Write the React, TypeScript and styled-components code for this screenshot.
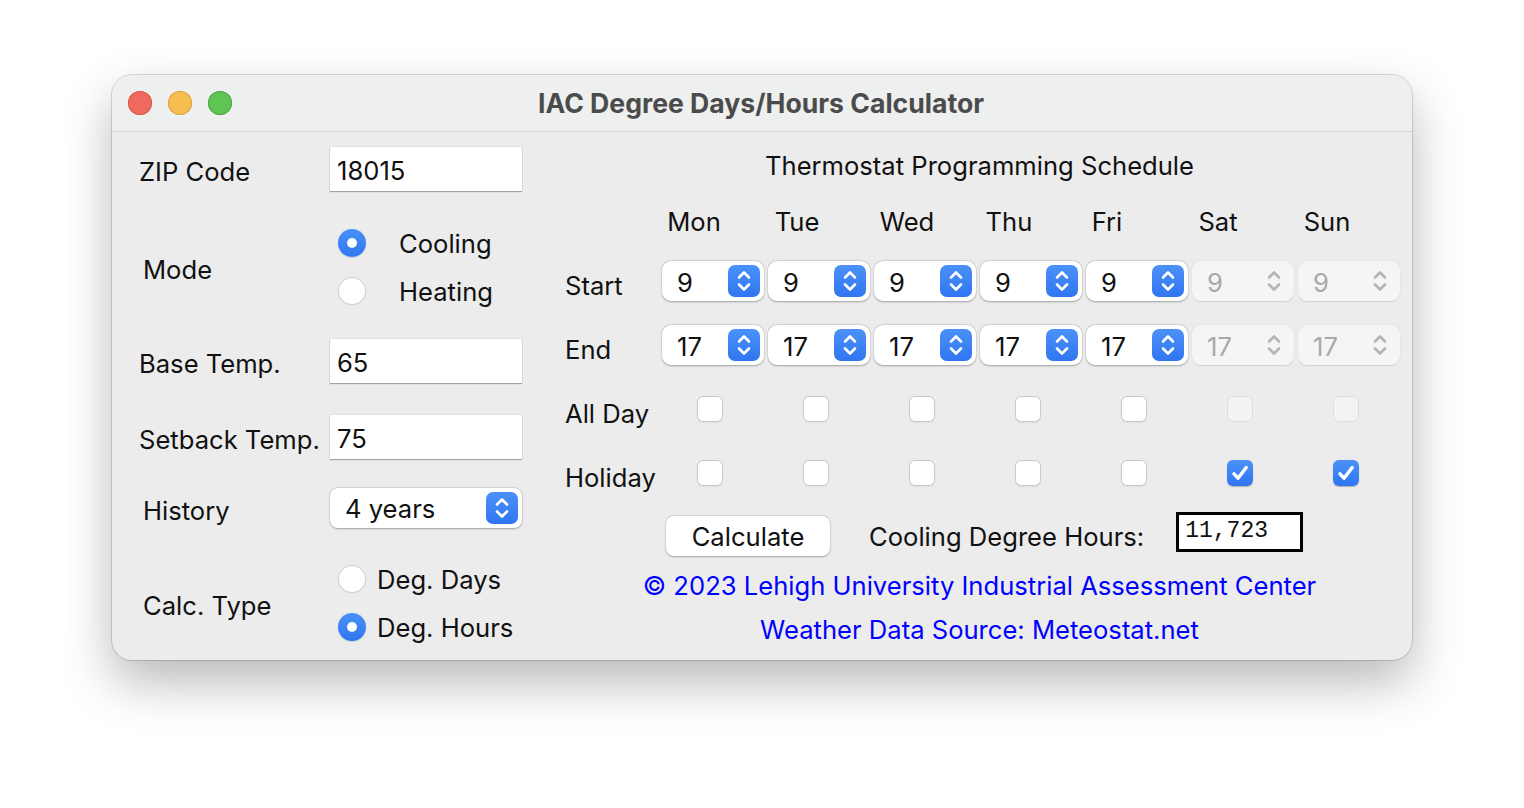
import React from 'react';
import styled, { createGlobalStyle } from 'styled-components';

const GlobalStyle = createGlobalStyle`
  html, body {
    margin: 0;
    padding: 0;
    background: #ffffff;
  }
  body {
    font-family: Inter, "Noto Sans", "Liberation Sans", sans-serif;
    color: #111;
  }
`;

const FS = '25.6px';

const Page = styled.div`
  width: 1524px;
  height: 808px;
  box-sizing: border-box;
  padding: 75px 0 0 112px;
`;

const Window = styled.div`
  width: 1300px;
  height: 585px;
  border-radius: 20px;
  overflow: hidden;
  background: #ececec;
  box-shadow: 0 22px 50px rgba(0, 0, 0, 0.28), 0 0 0 1px rgba(0, 0, 0, 0.14);
  display: flex;
  flex-direction: column;
`;

const TitleBar = styled.div`
  flex: none;
  height: 57px;
  box-sizing: border-box;
  display: grid;
  grid-template-columns: 1fr auto 1fr;
  align-items: center;
  padding: 0 16px;
  background: #eeefef;
  border-bottom: 1px solid #d3d3d3;
`;

const Lights = styled.div`
  display: flex;
  gap: 16px;
`;

const Light = styled.span<{ $color: string; $edge: string }>`
  width: 24px;
  height: 24px;
  border-radius: 50%;
  background: ${(p) => p.$color};
  box-shadow: inset 0 0 0 1px ${(p) => p.$edge};
`;

const Title = styled.div`
  font-size: 26.6px;
  font-weight: 700;
  color: #4b4b4b;
  padding-right: 2px;
`;

const Body = styled.div`
  flex: 1;
  display: grid;
  grid-template-columns: 440px 1fr;
`;

const LeftPanel = styled.div`
  padding: 15px 0 0 27px;
  display: flex;
  flex-direction: column;
`;

const FormRow = styled.div<{ $top: number; $h: number }>`
  margin-top: ${(p) => p.$top}px;
  height: ${(p) => p.$h}px;
  display: grid;
  grid-template-columns: 191px 192px;
  align-items: center;
`;

const Label = styled.div<{ $indent?: number }>`
  font-size: ${FS};
  padding-top: 5px;
  padding-left: ${(p) => p.$indent || 0}px;
  white-space: nowrap;
`;

const TextField = styled.div`
  height: 44px;
  box-sizing: border-box;
  padding: 2px 0 0 7px;
  display: flex;
  align-items: center;
  background: #fff;
  font-size: ${FS};
  box-shadow: 0 1px 1px rgba(0, 0, 0, 0.28), 0 0 0 0.5px rgba(0, 0, 0, 0.08);
`;

const RadioGroup = styled.div`
  display: flex;
  flex-direction: column;
  padding-left: 8px;
`;

const RadioOption = styled.div<{ $gap: number }>`
  height: 48px;
  display: flex;
  align-items: center;
  gap: ${(p) => p.$gap}px;
  font-size: ${FS};
  white-space: nowrap;
`;

const RadioDot = styled.span<{ $on?: boolean }>`
  flex: none;
  width: 28px;
  height: 28px;
  border-radius: 50%;
  box-sizing: border-box;
  display: flex;
  align-items: center;
  justify-content: center;
  background: ${(p) => (p.$on ? 'linear-gradient(#4b91f8, #2f76f2)' : '#fff')};
  box-shadow: ${(p) =>
    p.$on
      ? '0 0.5px 1px rgba(0,0,0,0.25)'
      : 'inset 0 0 0 1px #cfcfcf, 0 0.5px 1px rgba(0,0,0,0.08)'};
  &::after {
    content: '';
    display: ${(p) => (p.$on ? 'block' : 'none')};
    width: 10px;
    height: 10px;
    border-radius: 50%;
    background: #fff;
  }
`;

const SelectBox = styled.div`
  height: 40px;
  box-sizing: border-box;
  border-radius: 8px;
  background: #fff;
  box-shadow: 0 0.5px 2px rgba(0, 0, 0, 0.3), 0 0 0 0.5px rgba(0, 0, 0, 0.06);
  display: flex;
  align-items: center;
  justify-content: space-between;
  padding: 0 4px 0 15px;
  font-size: ${FS};
`;

const Stepper = styled.span<{ $off?: boolean }>`
  flex: none;
  width: 32px;
  height: 32px;
  border-radius: 7px;
  display: flex;
  align-items: center;
  justify-content: center;
  background: ${(p) => (p.$off ? 'transparent' : 'linear-gradient(#4b91f8, #2f76f2)')};
  svg {
    display: block;
  }
`;

const RightPanel = styled.div`
  padding: 19px 8px 0 13px;
  display: flex;
  flex-direction: column;
`;

const ScheduleTitle = styled.div`
  height: 30px;
  line-height: 30px;
  text-align: center;
  padding-right: 10px;
  font-size: ${FS};
`;

const Grid = styled.div`
  margin-top: 25px;
  display: grid;
  grid-template-columns: 97px repeat(7, 106px);
  grid-template-rows: 31px repeat(4, 40px);
  row-gap: 24px;
  align-items: center;
`;

const DayHead = styled.div<{ $c: number }>`
  width: ${(p) => p.$c * 2}px;
  text-align: center;
  font-size: ${FS};
`;

const RowLabel = styled.div`
  font-size: ${FS};
  padding-top: 8px;
  white-space: nowrap;
`;

const Spinner = styled.div<{ $off?: boolean }>`
  width: 102px;
  height: 40px;
  box-sizing: border-box;
  border-radius: 9px;
  display: flex;
  align-items: center;
  justify-content: space-between;
  padding: 0 4px 0 15px;
  font-size: ${FS};
  background: ${(p) => (p.$off ? '#f5f5f5' : '#fff')};
  color: ${(p) => (p.$off ? '#a9a9a9' : '#111')};
  box-shadow: ${(p) =>
    p.$off
      ? '0 0.5px 1.5px rgba(0,0,0,0.12)'
      : '0 0.5px 2px rgba(0,0,0,0.3), 0 0 0 0.5px rgba(0,0,0,0.06)'};
`;

const SpinValue = styled.span`
  padding-top: 3px;
`;

const CheckCell = styled.div`
  padding-left: 35px;
  display: flex;
  align-items: center;
`;

const Check = styled.span<{ $on?: boolean; $off?: boolean }>`
  width: 26px;
  height: 26px;
  border-radius: 6px;
  box-sizing: border-box;
  display: flex;
  align-items: center;
  justify-content: center;
  background: ${(p) =>
    p.$on ? 'linear-gradient(#4b91f8, #2f76f2)' : p.$off ? '#f3f3f3' : '#fff'};
  box-shadow: ${(p) =>
    p.$on
      ? '0 0.5px 1px rgba(0,0,0,0.25)'
      : p.$off
      ? 'inset 0 0 0 1px #dedede'
      : 'inset 0 0 0 1px #c9c9c9, 0 0.5px 1px rgba(0,0,0,0.06)'};
`;

const CalcRow = styled.div`
  margin-top: 19px;
  height: 44px;
  display: flex;
  align-items: flex-start;
  padding-left: 101px;
`;

const Button = styled.div`
  margin-top: 4px;
  width: 164px;
  height: 40px;
  border-radius: 8px;
  background: #fff;
  box-shadow: 0 0.5px 2px rgba(0, 0, 0, 0.3), 0 0 0 0.5px rgba(0, 0, 0, 0.06);
  display: flex;
  align-items: center;
  justify-content: center;
  font-size: ${FS};
`;

const ResultLabel = styled.div`
  margin-left: 39px;
  height: 48px;
  display: flex;
  align-items: center;
  font-size: ${FS};
  white-space: nowrap;
`;

const ResultBox = styled.div`
  margin-left: 32px;
  width: 127px;
  height: 40px;
  box-sizing: border-box;
  border: 3px solid #000;
  background: #fff;
  padding: 0 0 3px 6px;
  display: flex;
  align-items: center;
  font-family: "Liberation Mono", "DejaVu Sans Mono", monospace;
  font-size: 23px;
`;

const FooterLine = styled.div<{ $top: number }>`
  margin-top: ${(p) => p.$top}px;
  height: 30px;
  line-height: 30px;
  text-align: center;
  padding-right: 10px;
  font-size: ${FS};
  color: #0000ff;
  white-space: nowrap;
`;

const Chevrons: React.FC<{ color: string }> = ({ color }) => (
  <svg width="32" height="32" viewBox="0 0 32 32" fill="none">
    <path
      d="M11 12.5 L16 7.5 L21 12.5 M11 19.5 L16 24.5 L21 19.5"
      stroke={color}
      strokeWidth="2.6"
      strokeLinecap="round"
      strokeLinejoin="round"
    />
  </svg>
);

const Tick: React.FC = () => (
  <svg width="26" height="26" viewBox="0 0 26 26" fill="none">
    <path
      d="M7 13.8 L11 18.2 L19.2 7.5"
      stroke="#fff"
      strokeWidth="3.4"
      strokeLinecap="round"
      strokeLinejoin="round"
    />
  </svg>
);

const days = [
  { name: 'Mon', c: 32 },
  { name: 'Tue', c: 29 },
  { name: 'Wed', c: 33 },
  { name: 'Thu', c: 29 },
  { name: 'Fri', c: 21 },
  { name: 'Sat', c: 26 },
  { name: 'Sun', c: 29 },
];

const weekend = (i: number) => i >= 5;

const App: React.FC = () => {
  return (
    <Page>
      <GlobalStyle />
      <Window>
        <TitleBar>
          <Lights>
            <Light $color="#ef6a5e" $edge="#d9574b" />
            <Light $color="#f6be50" $edge="#dea23a" />
            <Light $color="#5fc454" $edge="#4ca73f" />
          </Lights>
          <Title>IAC Degree Days/Hours Calculator</Title>
          <div />
        </TitleBar>
        <Body>
          <LeftPanel>
            <FormRow $top={0} $h={44}>
              <Label>ZIP Code</Label>
              <TextField>18015</TextField>
            </FormRow>
            <FormRow $top={28} $h={96}>
              <Label $indent={4}>Mode</Label>
              <RadioGroup>
                <RadioOption $gap={33}>
                  <RadioDot $on />
                  Cooling
                </RadioOption>
                <RadioOption $gap={33}>
                  <RadioDot />
                  Heating
                </RadioOption>
              </RadioGroup>
            </FormRow>
            <FormRow $top={24} $h={44}>
              <Label>Base Temp.</Label>
              <TextField>65</TextField>
            </FormRow>
            <FormRow $top={32} $h={44}>
              <Label>Setback Temp.</Label>
              <TextField>75</TextField>
            </FormRow>
            <FormRow $top={29} $h={40}>
              <Label $indent={4}>History</Label>
              <SelectBox>
                4 years
                <Stepper>
                  <Chevrons color="#fff" />
                </Stepper>
              </SelectBox>
            </FormRow>
            <FormRow $top={27} $h={96}>
              <Label $indent={4}>Calc. Type</Label>
              <RadioGroup>
                <RadioOption $gap={11}>
                  <RadioDot />
                  Deg. Days
                </RadioOption>
                <RadioOption $gap={11}>
                  <RadioDot $on />
                  Deg. Hours
                </RadioOption>
              </RadioGroup>
            </FormRow>
          </LeftPanel>

          <RightPanel>
            <ScheduleTitle>Thermostat Programming Schedule</ScheduleTitle>
            <Grid>
              <div />
              {days.map((d) => (
                <DayHead key={d.name} $c={d.c}>
                  {d.name}
                </DayHead>
              ))}

              <RowLabel>Start</RowLabel>
              {days.map((d, i) => (
                <Spinner key={d.name} $off={weekend(i)}>
                  <SpinValue>9</SpinValue>
                  <Stepper $off={weekend(i)}>
                    <Chevrons color={weekend(i) ? '#b4b4b4' : '#fff'} />
                  </Stepper>
                </Spinner>
              ))}

              <RowLabel>End</RowLabel>
              {days.map((d, i) => (
                <Spinner key={d.name} $off={weekend(i)}>
                  <SpinValue>17</SpinValue>
                  <Stepper $off={weekend(i)}>
                    <Chevrons color={weekend(i) ? '#b4b4b4' : '#fff'} />
                  </Stepper>
                </Spinner>
              ))}

              <RowLabel>All Day</RowLabel>
              {days.map((d, i) => (
                <CheckCell key={d.name}>
                  <Check $off={weekend(i)} />
                </CheckCell>
              ))}

              <RowLabel>Holiday</RowLabel>
              {days.map((d, i) => (
                <CheckCell key={d.name}>
                  <Check $on={weekend(i)}>{weekend(i) && <Tick />}</Check>
                </CheckCell>
              ))}
            </Grid>

            <CalcRow>
              <Button>Calculate</Button>
              <ResultLabel>Cooling Degree Hours:</ResultLabel>
              <ResultBox>11,723</ResultBox>
            </CalcRow>

            <FooterLine $top={15}>© 2023 Lehigh University Industrial Assessment Center</FooterLine>
            <FooterLine $top={14}>Weather Data Source: Meteostat.net</FooterLine>
          </RightPanel>
        </Body>
      </Window>
    </Page>
  );
};

export default App;
